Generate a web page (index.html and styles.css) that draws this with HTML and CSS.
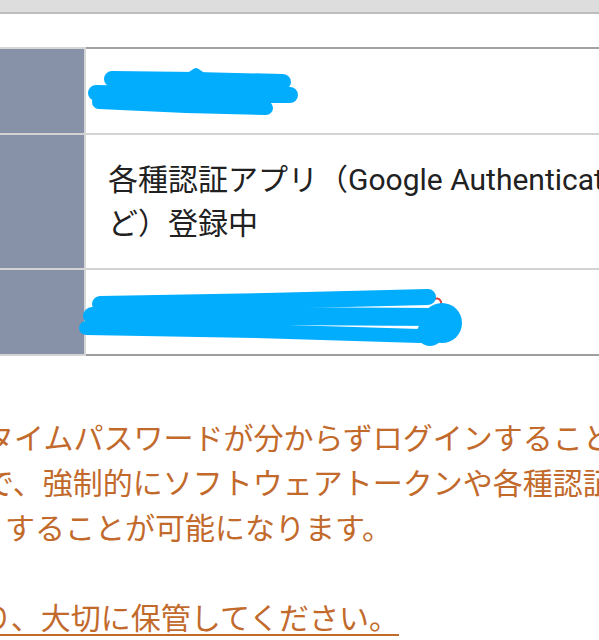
FILE: index.html
```html
<!DOCTYPE html>
<html lang="ja">
<head>
<meta charset="utf-8">
<title>認証設定</title>
<link rel="stylesheet" href="styles.css">
</head>
<body>
<div class="topbar"></div>
<table class="info">
  <tr class="row-short">
    <th class="label"></th>
    <td class="val">
      <svg class="redact" width="260" height="60" viewBox="0 0 260 60">
        <g stroke="#03adfd" stroke-linecap="round" stroke-linejoin="round" fill="none">
          <path d="M26 30 L110 31 L197 33" stroke-width="16"/>
          <path d="M10 44 L120 46 L204 46" stroke-width="16"/>
          <path d="M13 53 L100 57 L180 59" stroke-width="14"/>
          <path d="M104 27 L110 23 L116 27" stroke-width="8"/>
        </g>
      </svg>
    </td>
  </tr>
  <tr class="row-tall">
    <th class="label"></th>
    <td class="val">各種認証アプリ（Google Authenticatorな<br>ど）登録中</td>
  </tr>
  <tr class="row-short">
    <th class="label"></th>
    <td class="val">
      <svg class="redact" width="400" height="90" viewBox="0 0 400 90">
        <path d="M346 32 a4.5 4.5 0 0 1 9 2" stroke="#e0403a" stroke-width="2" fill="none"/>
        <g stroke="#03adfd" stroke-linecap="round" stroke-linejoin="round" fill="none">
          <path d="M14 34 L180 31 L342 27" stroke-width="16"/>
          <path d="M6 46 L180 46 L350 47" stroke-width="18"/>
          <path d="M0 58 L170 61 L334 66" stroke-width="14"/>
        </g>
        <circle cx="356" cy="53" r="20" fill="#03adfd"/>
        <circle cx="344" cy="63" r="13" fill="#03adfd"/>
      </svg>
    </td>
  </tr>
</table>
<div class="note">
  <span class="line line-1">ワンタイムパスワードが分からずログインすることができない場合でも</span>
  <span class="line line-2">の上で、強制的にソフトウェアトークンや各種認証アプリの登録を</span>
  <span class="line line-3">することが可能になります。</span>
  <span class="line line-blank">&nbsp;</span>
  <span class="line line-4"><a class="note-link" href="#">通り、大切に保管してください。</a></span>
</div>
</body>
</html>
```
FILE: styles.css
```css
html, body {
  margin: 0;
  padding: 0;
  overflow: hidden;
  background: #ffffff;
}

body {
  width: 599px;
  font-family: Roboto, "Noto Sans CJK JP", sans-serif;
}

.topbar {
  height: 12px;
  background: #dddddd;
  border-bottom: 2px solid #bdbdbd;
  margin-bottom: 33px;
}

.info {
  border-collapse: separate;
  border-spacing: 0;
  width: 780px;
}

.label {
  width: 84px;
  padding: 0;
  background: #8791a8;
  border-right: 2px solid #d6d6d6;
  border-bottom: 2px solid #d3d3d3;
}

.val {
  position: relative;
  padding: 0 0 0 22px;
  font-size: 30px;
  line-height: 44px;
  color: #212121;
  vertical-align: middle;
  text-align: left;
  border-bottom: 2px solid #d3d3d3;
}

.info tr:first-child .label,
.info tr:first-child .val {
  border-top: 2px solid #a3a3a3;
}

.info tr:first-child .label {
  border-top-color: #d6d6d6;
}

.info tr:last-child .val {
  border-bottom-color: #9e9e9e;
}

.row-short .label,
.row-short .val {
  height: 84px;
}

.row-tall .label,
.row-tall .val {
  height: 133px;
}

.redact {
  position: absolute;
  left: 0;
  top: 0;
  overflow: visible;
}

.note {
  margin-top: 58px;
  font-family: "Noto Sans CJK JP", sans-serif;
  font-size: 30px;
  line-height: 45px;
  color: #c26a2c;
  white-space: nowrap;
}

.line {
  display: block;
}

.line-1,
.line-2 {
  margin-left: -76px;
}

.line-3 {
  margin-left: 5px;
}

.line-4 {
  margin-left: -48px;
}

.note-link {
  color: #c26a2c;
  text-decoration: underline;
  text-decoration-thickness: 2px;
  text-underline-offset: 5px;
}
```
